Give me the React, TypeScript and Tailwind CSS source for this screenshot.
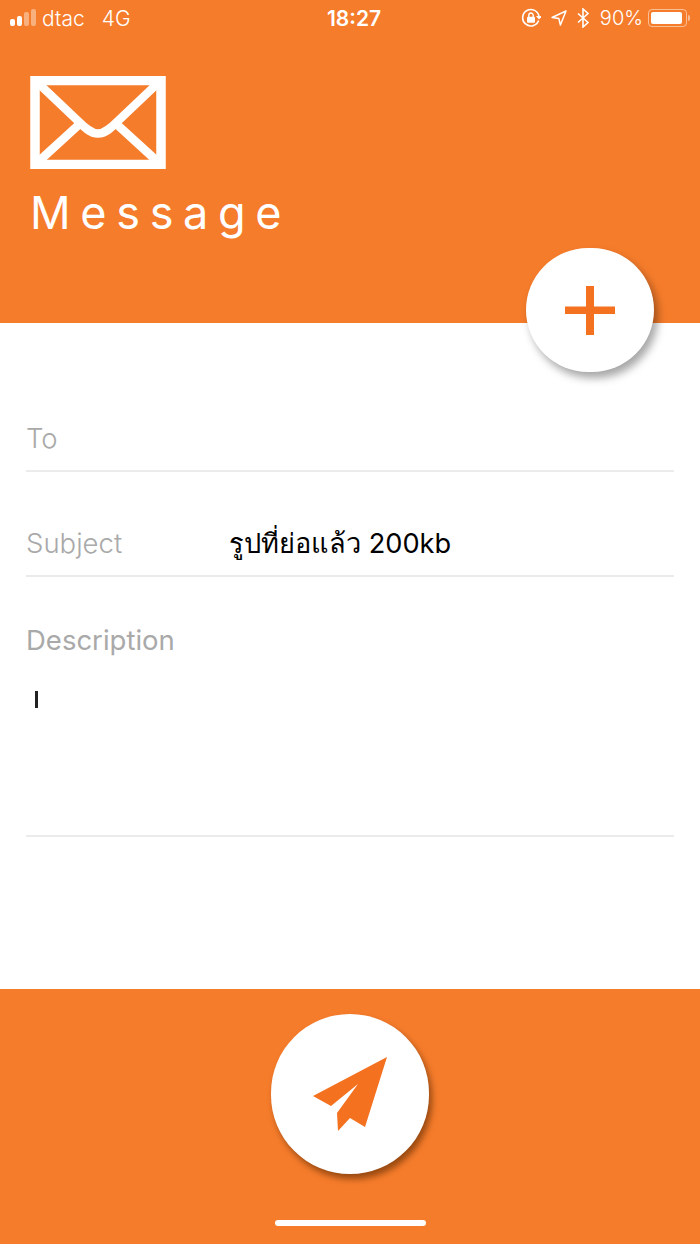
const orange = "bg-[#f57c2b]"

export default function App() {
  return (
    <div className="flex flex-col h-[1244px] w-[700px] overflow-hidden bg-white font-['Inter','Noto_Sans',sans-serif]">
      <Header />
      <Form />
      <Footer />
    </div>
  )
}

function StatusBar() {
  return (
    <div className="flex items-center justify-between h-[36px] pl-[10px] pr-[9px] text-white text-[21px] font-light">
      <div className="flex items-center w-[207px]">
        <div className="flex items-end gap-[2px] h-[17px] mb-[1px]">
          <div className="w-[5px] h-[7px] rounded-[2px] bg-white"></div>
          <div className="w-[5px] h-[10px] rounded-[2px] bg-white"></div>
          <div className="w-[5px] h-[14px] rounded-[2px] bg-white/40"></div>
          <div className="w-[5px] h-[17px] rounded-[2px] bg-white/40"></div>
        </div>
        <span className="ml-[6px] leading-none">dtac</span>
        <span className="ml-[17px] leading-none">4G</span>
      </div>

      <span className="font-semibold leading-none">18:27</span>

      <div className="flex items-center justify-end w-[200px]">
        <svg width="20" height="20" viewBox="0 0 20 20" fill="none" className="text-white">
          <path d="M17.6 12.5A8.2 8.2 0 1 1 18 8.6" stroke="currentColor" strokeWidth="1.6" />
          <path d="M15 8h6l-3 3.6z" fill="currentColor" />
          <rect x="6" y="8.8" width="8" height="6" rx="1" fill="currentColor" />
          <path d="M7.8 9V7.2a2.2 2.2 0 0 1 4.4 0V9" stroke="currentColor" strokeWidth="1.4" />
        </svg>
        <svg width="16" height="16" viewBox="0 0 16 16" fill="none" className="ml-[10px]">
          <path d="M15 1 1 7.5l6.8 .9 1.6 6.6z" stroke="white" strokeWidth="1.5" strokeLinejoin="round" />
        </svg>
        <svg width="13" height="20" viewBox="0 0 13 20" fill="none" className="ml-[10px]">
          <path d="M1 5.5l10 9-5 4.500V1l5 4.500-10 9" stroke="white" strokeWidth="1.6" />
        </svg>
        <span className="ml-[10px] text-[20px] leading-none">90%</span>
        <div className="flex items-center ml-[5px] mr-[1px]">
          <div className="w-[39px] h-[18px] rounded-[4px] border border-white/50 p-[2px]">
            <div className="h-full w-[31px] rounded-[2px] bg-white"></div>
          </div>
          <div className="w-[2px] h-[6px] ml-[1px] rounded-r-[2px] bg-white/50"></div>
        </div>
      </div>
    </div>
  )
}

function Envelope() {
  return (
    <svg width="136" height="93" viewBox="0 0 136 93" fill="none" stroke="white">
      <rect x="5" y="4.500" width="126" height="84" strokeWidth="9.500" />
      <path d="M8 7 47 44C53 50 60 57.500 68 57.500S83 50 89 44L128 7" strokeWidth="8.500" />
      <path d="M8 86 50 47.600M128 86 86 47.600" strokeWidth="8.500" />
    </svg>
  )
}

function Header() {
  return (
    <div className={`relative h-[323px] shrink-0 ${orange}`}>
      <StatusBar />
      <div className="ml-[30px] mt-[40px]">
        <Envelope />
      </div>
      <h1 className="ml-[30px] mt-[14px] text-[45px] leading-[60px] font-normal tracking-[0.215em] text-white">Message</h1>

      <button className="absolute left-[526px] top-[248px] flex items-center justify-center w-[128px] h-[124px] rounded-full bg-white shadow-[4px_6px_8px_rgba(0,0,0,0.35)]">
        <svg width="50" height="49" viewBox="0 0 50 49" fill="#f4711f">
          <rect x="0" y="20.500" width="50" height="7.500" />
          <rect x="21" y="0" width="8" height="49" />
        </svg>
      </button>
    </div>
  )
}

function Form() {
  return (
    <div className="flex-1 px-[26px] text-[27.500px] font-light text-[#a9a9a9]">
      <div className="flex items-center h-[46px] mt-[90px] pt-[3px] border-b-2 border-[#ebebeb] box-content pb-[8px]">
        <span className="leading-none">To</span>
      </div>
      <div className="flex items-center h-[46px] mt-[49px] border-b-2 border-[#ebebeb] box-content pb-[8px]">
        <span className="w-[203px] leading-none">Subject</span>
        <span className="text-[27.200px] leading-none text-black font-normal">รูปที่ย่อแล้ว 200kb</span>
      </div>
      <div className="h-[260px] border-b-2 border-[#ebebeb] pt-[50px]">
        <div className="leading-none font-normal">Description</div>
        <div className="ml-[9px] mt-[36px] w-[3px] h-[17px] bg-[#222]"></div>
      </div>
    </div>
  )
}

function Footer() {
  return (
    <div className={`flex flex-col items-center h-[255px] shrink-0 ${orange}`}>
      <button className="flex items-center justify-center w-[158px] h-[160px] mt-[25px] rounded-full bg-white shadow-[3px_5px_6px_rgba(90,40,0,0.6)]">
        <svg width="74" height="75" viewBox="0 0 74 75" fill="#f4711f">
          <path d="M74 0 0 39l18 10 27-22-21 29 1 18 12-13 15 9z" />
        </svg>
      </button>
      <div className="w-[151px] h-[6px] mt-[46px] rounded-full bg-white"></div>
    </div>
  )
}
